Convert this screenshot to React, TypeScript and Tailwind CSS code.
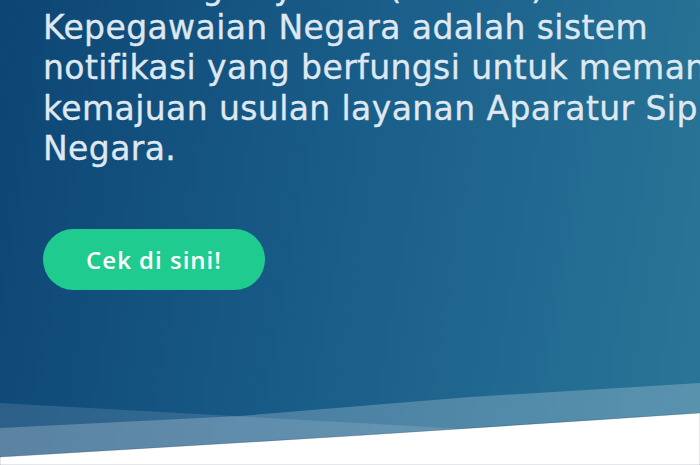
import React from "react";

export default function App() {
  const lines = [
    "Monitoring Layanan (SIMOLA) Badan",
    "Kepegawaian Negara adalah sistem",
    "notifikasi yang berfungsi untuk memantau",
    "kemajuan usulan layanan Aparatur Sipil",
    "Negara.",
  ];
  return (
    <div className="relative h-[465px] w-[700px] overflow-hidden bg-[linear-gradient(100deg,#0d4574_0%,#1a5e8a_50%,#2a7698_100%)]">
      <div className="relative z-10 pl-[43px]">
        <div
          className="mt-[-32px] whitespace-nowrap text-[33px] leading-[40.2px] tracking-[0.4px] text-[#dfe8f0] [-webkit-text-stroke:0.35px_#dfe8f0]"
          style={{ fontFamily: '"DejaVu Sans", "Open Sans", sans-serif' }}
        >
          {lines.map((l, i) => (
            <div key={i}>{l}</div>
          ))}
        </div>
        <button
          className="mt-[60px] flex h-[61px] w-[222px] items-center justify-center rounded-full bg-[#1fcb8e] text-[24px] font-semibold tracking-[1px] text-white"
          style={{ fontFamily: '"Open Sans", "DejaVu Sans", sans-serif' }}
        >
          Cek di sini!
        </button>
      </div>
      <svg
        className="absolute bottom-0 left-0"
        width="700"
        height="90"
        viewBox="0 375 700 90"
        preserveAspectRatio="none"
      >
        <polygon points="0,403 430,427 700,442 700,465 0,465" fill="#ffffff" fillOpacity="0.12" />
        <polygon points="0,428 240,416 470,397 700,383 700,465 0,465" fill="#ffffff" fillOpacity="0.22" />
        <path
          d="M0,457 Q350,437 700,413 L700,465 L0,465 Z"
          fill="#ffffff"
          stroke="rgba(40,60,80,0.25)"
          strokeWidth="1"
        />
      </svg>
    </div>
  );
}
